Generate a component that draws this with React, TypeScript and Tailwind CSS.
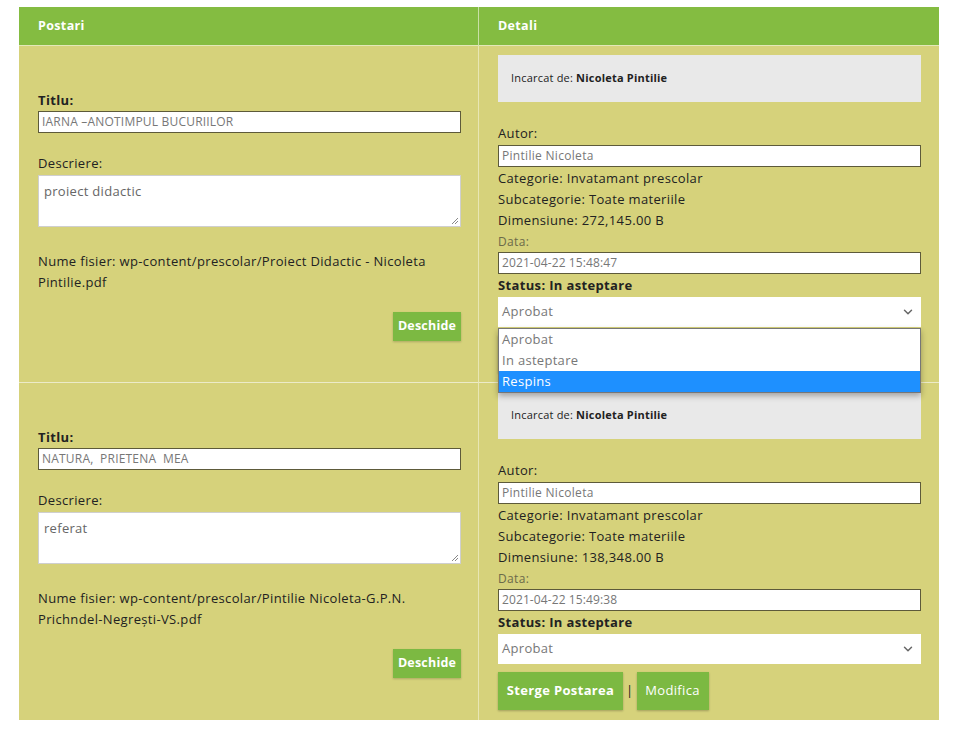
import React from 'react';
import { ChevronDown } from 'lucide-react';

interface Post {
  titlu: string;
  descriere: string;
  fisier: string;
  autor: string;
  dimensiune: string;
  data: string;
  open?: boolean;
}

const posts: Post[] = [
  {
    titlu: 'IARNA –ANOTIMPUL BUCURIILOR',
    descriere: 'proiect didactic',
    fisier: 'wp-content/prescolar/Proiect Didactic - Nicoleta Pintilie.pdf',
    autor: 'Pintilie Nicoleta',
    dimensiune: '272,145.00 B',
    data: '2021-04-22 15:48:47',
    open: true,
  },
  {
    titlu: 'NATURA,  PRIETENA  MEA',
    descriere: 'referat',
    fisier: 'wp-content/prescolar/Pintilie Nicoleta-G.P.N. Prichndel-Negrești-VS.pdf',
    autor: 'Pintilie Nicoleta',
    dimensiune: '138,348.00 B',
    data: '2021-04-22 15:49:38',
  },
];

// montserrat-ish labels, poppins-ish form fields
const mont = { fontFamily: '"Open Sans", "Liberation Sans", sans-serif' };
const pop = { fontFamily: '"Open Sans", Lato, sans-serif' };

const App: React.FC = () => {
  return (
    <div className="w-[958px] h-[737px] bg-white pt-[7px] pl-[19px] text-[#222] tracking-[0.35px]" style={mont}>
      <div className="w-[920px] grid grid-cols-2 bg-[#d6d27b]">
        {/* Header */}
        <div className="h-[39px] bg-[#84bc41] border-r border-[#c9e0a6] border-b border-b-[#e3e8b8] flex items-center px-[19px] text-white text-[12.5px] font-bold">
          Postari
        </div>
        <div className="h-[39px] bg-[#84bc41] border-b border-[#e3e8b8] flex items-center px-[19px] text-white text-[12.5px] font-bold">
          Detali
        </div>

        {posts.map((p, i) => (
          <React.Fragment key={i}>
            {/* Left cell */}
            <div
              className={`h-[337px] pl-[19px] pr-[17px] flex flex-col justify-center border-r border-[#e8e6b4] ${
                i === 0 ? 'border-b border-b-[#ecebc8]' : ''
              }`}
            >
              <div className="text-[13px] font-bold leading-[20px] mt-[2px]">Titlu:</div>
              <div className="mt-[1px] h-[22px] bg-white border border-[#5d5a3a] flex items-center pl-[3px] text-[12px] text-[#777] whitespace-pre tracking-[0.2px]" style={pop}>
                {p.titlu}
              </div>
              <div className="mt-[20px] text-[13px] leading-[20px]">Descriere:</div>
              <div className="relative mt-[2px] h-[52px] bg-white border border-[#cfcfcf] px-[5px] pt-[6px] text-[13px] text-[#666] tracking-[0.3px]" style={pop}>
                {p.descriere}
                <svg className="absolute right-[1px] bottom-[1px]" width="9" height="9" viewBox="0 0 9 9">
                  <path d="M8 2L2 8M8 5L5 8" stroke="#888" strokeWidth="1" />
                </svg>
              </div>
              <div className="mt-[24px] text-[13px] leading-[21px] pr-[20px]">Nume fisier: {p.fisier}</div>
              <div className="mt-[19px] flex justify-end">
                <button className="h-[29px] w-[68px] bg-[#7cb942] text-white text-[12.5px] font-bold tracking-[0.2px] shadow-[0_1px_2px_rgba(0,0,0,0.2)]">
                  Deschide
                </button>
              </div>
            </div>

            {/* Right cell */}
            <div className={`h-[337px] pl-[19px] pr-[18px] pt-[9px] ${i === 0 ? 'border-b border-[#ecebc8]' : ''}`}>
              <div className="h-[47px] bg-[#e9e9e9] flex items-center px-[13px] text-[11px] tracking-[0.2px]">
                Incarcat de:&nbsp;<span className="font-bold">Nicoleta Pintilie</span>
              </div>
              <div className="mt-[21px] text-[13px] leading-[21px]">Autor:</div>
              <div className="mt-[1px] h-[22px] bg-white border border-[#5d5a3a] flex items-center pl-[3px] text-[12px] text-[#777] tracking-[0.3px]" style={pop}>
                {p.autor}
              </div>
              <div className="text-[13px] leading-[21px] mt-[1px]">Categorie: Invatamant prescolar</div>
              <div className="text-[13px] leading-[21px]">Subcategorie: Toate materiile</div>
              <div className="text-[13px] leading-[21px]">Dimensiune: {p.dimensiune}</div>
              <div className="text-[12px] leading-[21px] text-[#6b6a4a]">Data:</div>
              <div className="h-[22px] bg-white border border-[#5d5a3a] flex items-center pl-[3px] text-[12px] text-[#777] tracking-[0.1px]" style={pop}>
                {p.data}
              </div>
              <div className="mt-[1px] text-[13px] leading-[21px] font-bold">Status: In asteptare</div>
              <div className="relative mt-[1px]">
                <div className="h-[30px] bg-white flex items-center justify-between pl-[4px] pr-[6px] text-[13px] text-[#777] tracking-[0.3px]" style={pop}>
                  Aprobat
                  <ChevronDown className="w-[14px] h-[14px] text-[#666]" strokeWidth={2.5} />
                </div>
                {p.open && (
                  <div className="absolute left-0 right-0 top-[31px] z-10 bg-white border border-[#767676] shadow-[0_3px_6px_rgba(0,0,0,0.3)] text-[13px] text-[#777] tracking-[0.3px]" style={pop}>
                    <div className="h-[21px] pl-[3px] flex items-center">Aprobat</div>
                    <div className="h-[21px] pl-[3px] flex items-center">In asteptare</div>
                    <div className="h-[21px] pl-[3px] flex items-center bg-[#1e90ff] text-white">Respins</div>
                  </div>
                )}
              </div>
              <div className="mt-[8px] flex items-center">
                <button className="h-[38px] w-[125px] bg-[#7cb942] text-white text-[13px] font-bold shadow-[0_1px_2px_rgba(0,0,0,0.25)]">
                  Sterge Postarea
                </button>
                <span className="mx-[3px] text-[13px]">|</span>
                <button className="h-[38px] w-[72px] bg-[#7cb942] text-white text-[13px] shadow-[0_1px_2px_rgba(0,0,0,0.25)]" style={pop}>
                  Modifica
                </button>
              </div>
            </div>
          </React.Fragment>
        ))}
      </div>
    </div>
  );
};

export default App;
